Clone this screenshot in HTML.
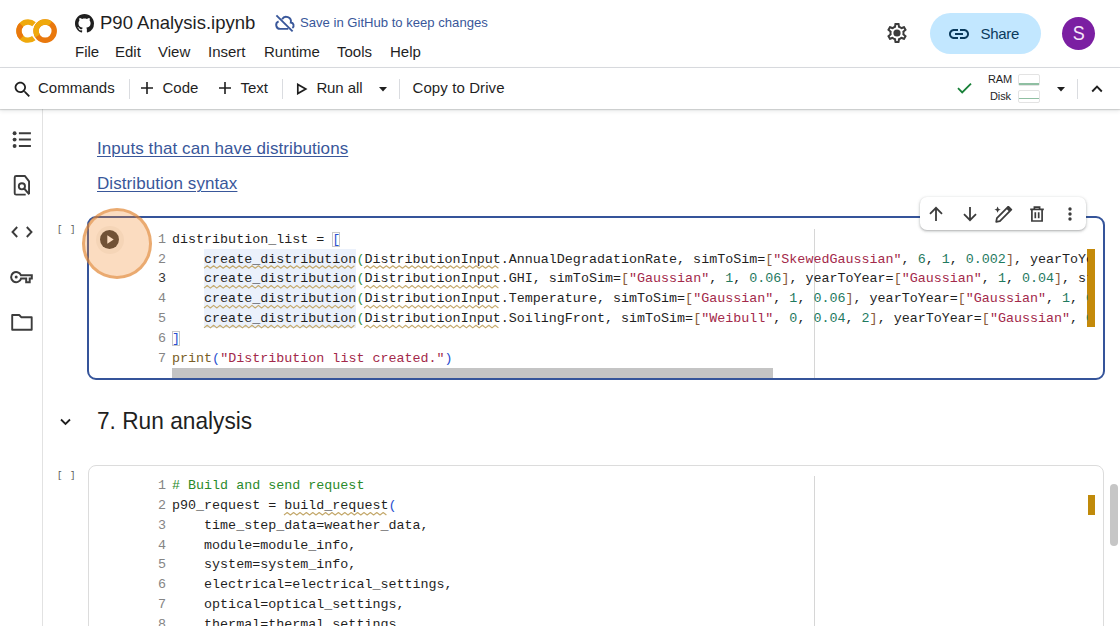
<!DOCTYPE html>
<html><head><meta charset="utf-8">
<style>
*{box-sizing:border-box;margin:0;padding:0}
html,body{width:1120px;height:626px;overflow:hidden;background:#fff;font-family:"Liberation Sans",sans-serif;color:#1f1f1f}
.abs{position:absolute}
.t{position:absolute;white-space:nowrap;line-height:1}
#header{position:absolute;left:0;top:0;width:1120px;height:68px;border-bottom:1px solid #dadce0;background:#fff}
.menu{position:absolute;top:43.9px;font-size:15px;line-height:1;color:#1f1f1f;white-space:nowrap}
#toolbar{position:absolute;z-index:5;left:0;top:68px;width:1120px;height:41px;background:#fff;box-shadow:0 1px 1px rgba(60,64,67,.18),0 2px 4px 0 rgba(60,64,67,.12)}
.tb{position:absolute;top:12.3px;font-size:15px;line-height:1;color:#1f1f1f;white-space:nowrap}
.sep{position:absolute;top:10.5px;width:1px;height:20px;background:#dadce0}
#sidebar{position:absolute;left:0;top:109px;width:43px;height:517px;border-right:1px solid #e2e2e2;background:#fff}
.link{position:absolute;left:97px;font-size:17px;line-height:1;color:#39579a;text-decoration:underline;text-underline-offset:2px;text-decoration-thickness:1.3px;white-space:nowrap;letter-spacing:0.08px}
.cell{position:absolute;border-radius:9px}
.code{position:absolute;font-family:"Liberation Mono",monospace;font-size:13.37px;line-height:19.85px;white-space:pre;color:#1f1f1f}
.ln{position:absolute;font-family:"Liberation Mono",monospace;font-size:13.37px;line-height:19.85px;white-space:pre;color:#858585;text-align:right}
.br{position:absolute;font-family:"Liberation Mono",monospace;font-size:11px;line-height:1;color:#444;white-space:pre}
.s{color:#a3294a}.n{color:#1f7a5f}.p1{color:#2a4fd0}.p2{color:#3a9040}.p3{color:#8a5a3a}.c{color:#2a8a2a}.f{color:#795e26}
.hl{background:#e7eefa}
.sq{text-decoration:underline wavy #d7b64a;text-decoration-thickness:1px;text-underline-offset:3px;text-decoration-skip-ink:none}
</style></head><body>

<div id="header">
  <!-- colab logo -->
  <svg class="abs" style="left:0;top:0" width="70" height="60" viewBox="0 0 70 60">
    <circle cx="28" cy="31.1" r="9.1" fill="none" stroke="#efa90c" stroke-width="5.3" stroke-dasharray="41.3 100" stroke-dashoffset="-7.94"/>
    <circle cx="28" cy="31.1" r="9.1" fill="none" stroke="#e9780d" stroke-width="5.3" stroke-dasharray="13.98 100" stroke-dashoffset="-21.28"/>
    <circle cx="45.15" cy="31.1" r="12.5" fill="#fff"/>
    <circle cx="45.15" cy="31.1" r="9.1" fill="none" stroke="#e9780d" stroke-width="5.4"/>
    <circle cx="45.15" cy="31.1" r="9.1" fill="none" stroke="#efa90c" stroke-width="5.4" stroke-dasharray="24.94 100" stroke-dashoffset="-23.19"/>
  </svg>
  <!-- github -->
  <svg class="abs" style="left:75px;top:14px" width="19" height="19" viewBox="0 0 16 16"><path fill="#1f1f1f" d="M8 0C3.58 0 0 3.58 0 8c0 3.54 2.29 6.53 5.47 7.59.4.07.55-.17.55-.38 0-.19-.01-.82-.01-1.49-2.010.37-2.530-.49-2.690-.94-.09-.23-.48-.94-.82-1.13-.28-.15-.68-.52-.01-.53.63-.01 1.08.58 1.23.82.72 1.21 1.87.87 2.33.66.07-.52.28-.87.51-1.07-1.78-.2-3.64-.89-3.64-3.95 0-.87.31-1.59.82-2.15-.08-.2-.36-1.02.08-2.12 0 0 .67-.21 2.2.82.64-.18 1.32-.27 2-.27.68 0 1.36.09 2 .27 1.53-1.04 2.2-.82 2.2-.82.44 1.1.16 1.92.08 2.12.51.56.82 1.27.82 2.15 0 3.07-1.87 3.75-3.65 3.95.29.25.54.73.54 1.48 0 1.07-.01 1.93-.01 2.2 0 .21.15.46.55.38A8.013 8.013 0 0016 8c0-4.42-3.58-8-8-8z"/></svg>
  <div class="t" style="left:100px;top:14.1px;font-size:18.5px;color:#1f1f1f">P90 Analysis.ipynb</div>
  <!-- cloud off -->
  <svg class="abs" style="left:270px;top:10px" width="28" height="26" viewBox="0 0 28 26"><g fill="none" stroke="#39579a" stroke-width="1.9" stroke-linecap="butt"><path d="M6.4 5.4L22.6 21.4"/><path d="M12.1 9.2A4.7 4.7 0 0 1 20.8 12.5A3 3 0 0 1 22.4 17.9"/><path d="M18.3 18.9H10.1A3.9 3.9 0 0 1 8.6 11.4"/></g></svg>
  <div class="t" style="left:300px;top:16.3px;font-size:13.1px;color:#39579a">Save in GitHub to keep changes</div>
  <div class="menu" style="left:75px">File</div>
  <div class="menu" style="left:115px">Edit</div>
  <div class="menu" style="left:158px">View</div>
  <div class="menu" style="left:208px">Insert</div>
  <div class="menu" style="left:264px">Runtime</div>
  <div class="menu" style="left:337px">Tools</div>
  <div class="menu" style="left:390px">Help</div>
  <!-- gear -->
  <svg class="abs" style="left:885px;top:21.4px" width="24" height="24" viewBox="0 0 24 24"><path fill="#3c3c3c" d="M19.43 12.98c.04-.32.07-.64.07-.98 0-.34-.03-.66-.07-.98l2.11-1.65c.19-.15.24-.42.12-.64l-2-3.46c-.09-.16-.26-.25-.44-.25-.06 0-.12.01-.17.03l-2.49 1c-.52-.4-1.08-.73-1.69-.98l-.38-2.65C14.46 2.18 14.25 2 14 2h-4c-.25 0-.46.18-.49.42l-.38 2.65c-.61.25-1.170.59-1.69.98l-2.49-1c-.06-.02-.12-.03-.18-.03-.17 0-.34.09-.43.25l-2 3.46c-.13.22-.07.49.12.64l2.11 1.65c-.04.32-.07.65-.07.98 0 .33.03.66.07.98l-2.11 1.65c-.19.15-.24.42-.12.64l2 3.46c.09.16.26.25.44.25.06 0 .12-.01.17-.03l2.49-1c.52.4 1.08.73 1.69.98l.38 2.65c.03.24.24.42.49.42h4c.25 0 .46-.18.49-.42l.38-2.65c.61-.25 1.17-.59 1.69-.98l2.49 1c.06.02.12.03.18.03.17 0 .34-.09.43-.25l2-3.46c.12-.22.07-.49-.12-.64l-2.11-1.65zm-1.98-1.71c.04.31.05.52.05.73 0 .21-.02.43-.05.73l-.14 1.13.89.7 1.08.84-.7 1.21-1.27-.51-1.04-.42-.9.68c-.43.32-.84.56-1.25.73l-1.06.43-.16 1.13-.2 1.35h-1.4l-.19-1.35-.16-1.13-1.06-.43c-.43-.18-.83-.41-1.23-.71l-.91-.7-1.06.43-1.27.51-.7-1.21 1.08-.84.89-.7-.14-1.13c-.03-.31-.05-.54-.05-.74s.02-.43.05-.73l.14-1.13-.89-.7-1.08-.84.7-1.21 1.27.51 1.04.42.9-.68c.43-.32.84-.56 1.25-.73l1.06-.43.16-1.13.2-1.35h1.39l.19 1.35.16 1.13 1.06.43c.43.18.83.41 1.23.71l.91.7 1.06-.43 1.27-.51.7 1.21-1.07.85-.89.7.14 1.13z"/><circle cx="12" cy="12" r="3.6" fill="#3c3c3c"/></svg>
  <div class="abs" style="left:930px;top:12.5px;width:111px;height:41.5px;border-radius:21px;background:#c2e7ff"></div>
  <svg class="abs" style="left:947px;top:21.6px" width="24" height="24" viewBox="0 0 24 24"><path fill="#0b3a5c" d="M3.9 12c0-1.71 1.39-3.1 3.1-3.1h4V7H7c-2.76 0-5 2.24-5 5s2.24 5 5 5h4v-1.9H7c-1.71 0-3.1-1.39-3.1-3.1zM8 13h8v-2H8v2zm9-6h-4v1.9h4c1.71 0 3.1 1.39 3.1 3.1s-1.39 3.1-3.1 3.1h-4V17h4c2.76 0 5-2.24 5-5s-2.24-5-5-5z"/></svg>
  <div class="t" style="left:980.5px;top:25.5px;font-size:15px;color:#0b3a5c;letter-spacing:-0.3px">Share</div>
  <div class="abs" style="left:1061.8px;top:16.8px;width:33.3px;height:33.3px;border-radius:50%;background:#7b1fa2"></div>
  <div class="t" style="left:1061.8px;top:23.6px;width:33.3px;text-align:center;font-size:19.5px;color:#f6e6f8;transform:scaleX(0.92)">S</div>
</div>
<div id="toolbar">
  <svg class="abs" style="left:12.4px;top:11.4px" width="21" height="21" viewBox="0 0 24 24"><path fill="#1f1f1f" d="M15.5 14h-.79l-.28-.27C15.41 12.59 16 11.11 16 9.5 16 5.91 13.09 3 9.5 3S3 5.91 3 9.5 5.91 16 9.5 16c1.61 0 3.09-.59 4.23-1.57l.27.28v.79l5 4.99L20.49 19l-4.99-5zm-6 0C7.01 14 5 11.99 5 9.5S7.01 5 9.5 5 14 7.01 14 9.5 11.99 14 9.5 14z"/></svg>
  <div class="tb" style="left:38px">Commands</div>
  <div class="sep" style="left:128.5px"></div>
  <svg class="abs" style="left:141px;top:14px" width="12" height="12" viewBox="0 0 12 12"><path d="M6 0v12M0 6h12" stroke="#1f1f1f" stroke-width="1.6"/></svg>
  <div class="tb" style="left:162.5px">Code</div>
  <svg class="abs" style="left:219px;top:14px" width="12" height="12" viewBox="0 0 12 12"><path d="M6 0v12M0 6h12" stroke="#1f1f1f" stroke-width="1.6"/></svg>
  <div class="tb" style="left:240.5px">Text</div>
  <div class="sep" style="left:281.5px"></div>
  <svg class="abs" style="left:296px;top:14.5px" width="12" height="12" viewBox="0 0 12 12"><path d="M1.8 1.4v9.2L9.8 6z" fill="none" stroke="#1f1f1f" stroke-width="1.7" stroke-linejoin="miter"/></svg>
  <div class="t" style="left:316.4px;top:12.3px;font-size:15px;letter-spacing:-0.1px">Run all</div>
  <svg class="abs" style="left:378.5px;top:19px" width="8" height="5" viewBox="0 0 8 5"><path d="M0 0h8L4 4.5z" fill="#1f1f1f"/></svg>
  <div class="sep" style="left:399px"></div>
  <div class="tb" style="left:412.5px;letter-spacing:0.1px">Copy to Drive</div>
  <svg class="abs" style="left:957px;top:13.6px" width="15" height="12" viewBox="0 0 15 12"><path d="M1 6.2l4.2 4.2L14 1.6" fill="none" stroke="#188038" stroke-width="1.8"/></svg>
  <div class="t" style="left:988px;top:6.4px;font-size:11px;color:#1f1f1f;letter-spacing:-0.2px">RAM</div>
  <div class="t" style="left:990px;top:23.3px;font-size:11px;color:#1f1f1f;letter-spacing:-0.1px">Disk</div>
  <div class="abs" style="left:1017.5px;top:5.7px;width:22px;height:12.5px;border:1px solid #e3e3e3;border-radius:2px"></div>
  <div class="abs" style="left:1018.5px;top:15.4px;width:20px;height:1.8px;background:#8fbfa2"></div>
  <div class="abs" style="left:1017.5px;top:22.4px;width:22px;height:13px;border:1px solid #e3e3e3;border-radius:2px"></div>
  <div class="abs" style="left:1018.5px;top:29.6px;width:20px;height:1.8px;background:#8fbfa2"></div>
  <svg class="abs" style="left:1056.5px;top:19px" width="8" height="5" viewBox="0 0 8 5"><path d="M0 0h8L4 4.5z" fill="#1f1f1f"/></svg>
  <div class="sep" style="left:1077.4px"></div>
  <svg class="abs" style="left:1091px;top:16.5px" width="12" height="8" viewBox="0 0 12 8"><path d="M1.2 6.5l4.8-4.8 4.8 4.8" fill="none" stroke="#1f1f1f" stroke-width="1.9"/></svg>
</div>

<div id="sidebar">
  <svg class="abs" style="left:12px;top:21px" width="20" height="20" viewBox="0 0 20 20"><circle cx="2.6" cy="3.2" r="1.95" fill="#3c3c3c"/><circle cx="2.6" cy="9.6" r="1.95" fill="#3c3c3c"/><circle cx="2.6" cy="16" r="1.95" fill="#3c3c3c"/><path d="M6.9 3.2h12M6.9 9.6h12M6.9 16h12" stroke="#3c3c3c" stroke-width="2"/></svg>
  <svg class="abs" style="left:8px;top:61px" width="28" height="30" viewBox="0 0 28 30"><path d="M17.7 24.65H8.2Q6.7 24.65 6.7 23.15V7.45Q6.7 5.95 8.2 5.95H16.8L21.05 11.3V24" fill="none" stroke="#3c3c3c" stroke-width="1.9" stroke-linejoin="round"/><circle cx="13.9" cy="16.3" r="3.1" fill="none" stroke="#3c3c3c" stroke-width="1.9"/><path d="M16.1 18.5L21.3 24.3" stroke="#3c3c3c" stroke-width="1.9"/></svg>
  <svg class="abs" style="left:11px;top:117px" width="22" height="12" viewBox="0 0 22 12"><path d="M6.2 1L1.5 6l4.7 5M15.8 1l4.7 5-4.7 5" fill="none" stroke="#3c3c3c" stroke-width="1.9"/></svg>
  <svg class="abs" style="left:6px;top:157px" width="32" height="24" viewBox="0 0 32 24"><path d="M14.93 9.2H25.8V12.6H23.7V16.2H20.2V12.6H15.07A5.1 5.1 0 1 1 14.93 9.2Z" fill="none" stroke="#3c3c3c" stroke-width="2" stroke-linejoin="miter"/><circle cx="10.2" cy="11.1" r="1.5" fill="#3c3c3c"/></svg>
  <svg class="abs" style="left:11px;top:205px" width="22" height="17" viewBox="0 0 22 17"><path d="M1.2 1h7l2 2.2h10.5v12.6H1.2z" fill="none" stroke="#3c3c3c" stroke-width="1.9" stroke-linejoin="round"/></svg>
</div>

<div class="link" style="top:139.7px">Inputs that can have distributions</div>
<div class="link" style="top:175.4px">Distribution syntax</div>
<!-- cell 1 -->
<div class="br" style="left:57px;top:225.5px;font-size:9px;letter-spacing:1.05px;color:#555">[ ]</div>
<div class="cell" style="left:87px;top:216.2px;width:1018.2px;height:163.4px;border:2px solid #35549a"></div>
<div class="abs" style="left:813.5px;top:229px;width:1px;height:149px;background:#d6d6d6"></div>
<div class="abs" style="left:1087px;top:248.6px;width:8px;height:78.4px;background:#c48a0a"></div>
<div class="abs" style="left:172px;top:368px;width:601px;height:9.5px;background:#c4c4c4"></div>
<div class="abs" style="left:204px;top:248.5px;width:152px;height:79.4px;background:#ebf1fb"></div>
<svg class="abs" style="left:0;top:0" width="1120" height="626"><path d="M204.00 268.30 L207.20 265.70 L210.40 268.30 L213.60 265.70 L216.80 268.30 L220.00 265.70 L223.20 268.30 L226.40 265.70 L229.60 268.30 L232.80 265.70 L236.00 268.30 L239.20 265.70 L242.40 268.30 L245.60 265.70 L248.80 268.30 L252.00 265.70 L255.20 268.30 L258.40 265.70 L261.60 268.30 L264.80 265.70 L268.00 268.30 L271.20 265.70 L274.40 268.30 L277.60 265.70 L280.80 268.30 L284.00 265.70 L287.20 268.30 L290.40 265.70 L293.60 268.30 L296.80 265.70 L300.00 268.30 L303.20 265.70 L306.40 268.30 L309.60 265.70 L312.80 268.30 L316.00 265.70 L319.20 268.30 L322.40 265.70 L325.60 268.30 L328.80 265.70 L332.00 268.30 L335.20 265.70 L338.40 268.30 L341.60 265.70 L344.80 268.30 L348.00 265.70 L351.20 268.30 L354.40 265.70 M364.00 268.30 L367.20 265.70 L370.40 268.30 L373.60 265.70 L376.80 268.30 L380.00 265.70 L383.20 268.30 L386.40 265.70 L389.60 268.30 L392.80 265.70 L396.00 268.30 L399.20 265.70 L402.40 268.30 L405.60 265.70 L408.80 268.30 L412.00 265.70 L415.20 268.30 L418.40 265.70 L421.60 268.30 L424.80 265.70 L428.00 268.30 L431.20 265.70 L434.40 268.30 L437.60 265.70 L440.80 268.30 L444.00 265.70 L447.20 268.30 L450.40 265.70 L453.60 268.30 L456.80 265.70 L460.00 268.30 L463.20 265.70 L466.40 268.30 L469.60 265.70 L472.80 268.30 L476.00 265.70 L479.20 268.30 L482.40 265.70 L485.60 268.30 L488.80 265.70 L492.00 268.30 L495.20 265.70 L498.40 268.30 M204.00 288.15 L207.20 285.55 L210.40 288.15 L213.60 285.55 L216.80 288.15 L220.00 285.55 L223.20 288.15 L226.40 285.55 L229.60 288.15 L232.80 285.55 L236.00 288.15 L239.20 285.55 L242.40 288.15 L245.60 285.55 L248.80 288.15 L252.00 285.55 L255.20 288.15 L258.40 285.55 L261.60 288.15 L264.80 285.55 L268.00 288.15 L271.20 285.55 L274.40 288.15 L277.60 285.55 L280.80 288.15 L284.00 285.55 L287.20 288.15 L290.40 285.55 L293.60 288.15 L296.80 285.55 L300.00 288.15 L303.20 285.55 L306.40 288.15 L309.60 285.55 L312.80 288.15 L316.00 285.55 L319.20 288.15 L322.40 285.55 L325.60 288.15 L328.80 285.55 L332.00 288.15 L335.20 285.55 L338.40 288.15 L341.60 285.55 L344.80 288.15 L348.00 285.55 L351.20 288.15 L354.40 285.55 M364.00 288.15 L367.20 285.55 L370.40 288.15 L373.60 285.55 L376.80 288.15 L380.00 285.55 L383.20 288.15 L386.40 285.55 L389.60 288.15 L392.80 285.55 L396.00 288.15 L399.20 285.55 L402.40 288.15 L405.60 285.55 L408.80 288.15 L412.00 285.55 L415.20 288.15 L418.40 285.55 L421.60 288.15 L424.80 285.55 L428.00 288.15 L431.20 285.55 L434.40 288.15 L437.60 285.55 L440.80 288.15 L444.00 285.55 L447.20 288.15 L450.40 285.55 L453.60 288.15 L456.80 285.55 L460.00 288.15 L463.20 285.55 L466.40 288.15 L469.60 285.55 L472.80 288.15 L476.00 285.55 L479.20 288.15 L482.40 285.55 L485.60 288.15 L488.80 285.55 L492.00 288.15 L495.20 285.55 L498.40 288.15 M204.00 308.00 L207.20 305.40 L210.40 308.00 L213.60 305.40 L216.80 308.00 L220.00 305.40 L223.20 308.00 L226.40 305.40 L229.60 308.00 L232.80 305.40 L236.00 308.00 L239.20 305.40 L242.40 308.00 L245.60 305.40 L248.80 308.00 L252.00 305.40 L255.20 308.00 L258.40 305.40 L261.60 308.00 L264.80 305.40 L268.00 308.00 L271.20 305.40 L274.40 308.00 L277.60 305.40 L280.80 308.00 L284.00 305.40 L287.20 308.00 L290.40 305.40 L293.60 308.00 L296.80 305.40 L300.00 308.00 L303.20 305.40 L306.40 308.00 L309.60 305.40 L312.80 308.00 L316.00 305.40 L319.20 308.00 L322.40 305.40 L325.60 308.00 L328.80 305.40 L332.00 308.00 L335.20 305.40 L338.40 308.00 L341.60 305.40 L344.80 308.00 L348.00 305.40 L351.20 308.00 L354.40 305.40 M364.00 308.00 L367.20 305.40 L370.40 308.00 L373.60 305.40 L376.80 308.00 L380.00 305.40 L383.20 308.00 L386.40 305.40 L389.60 308.00 L392.80 305.40 L396.00 308.00 L399.20 305.40 L402.40 308.00 L405.60 305.40 L408.80 308.00 L412.00 305.40 L415.20 308.00 L418.40 305.40 L421.60 308.00 L424.80 305.40 L428.00 308.00 L431.20 305.40 L434.40 308.00 L437.60 305.40 L440.80 308.00 L444.00 305.40 L447.20 308.00 L450.40 305.40 L453.60 308.00 L456.80 305.40 L460.00 308.00 L463.20 305.40 L466.40 308.00 L469.60 305.40 L472.80 308.00 L476.00 305.40 L479.20 308.00 L482.40 305.40 L485.60 308.00 L488.80 305.40 L492.00 308.00 L495.20 305.40 L498.40 308.00 M204.00 327.85 L207.20 325.25 L210.40 327.85 L213.60 325.25 L216.80 327.85 L220.00 325.25 L223.20 327.85 L226.40 325.25 L229.60 327.85 L232.80 325.25 L236.00 327.85 L239.20 325.25 L242.40 327.85 L245.60 325.25 L248.80 327.85 L252.00 325.25 L255.20 327.85 L258.40 325.25 L261.60 327.85 L264.80 325.25 L268.00 327.85 L271.20 325.25 L274.40 327.85 L277.60 325.25 L280.80 327.85 L284.00 325.25 L287.20 327.85 L290.40 325.25 L293.60 327.85 L296.80 325.25 L300.00 327.85 L303.20 325.25 L306.40 327.85 L309.60 325.25 L312.80 327.85 L316.00 325.25 L319.20 327.85 L322.40 325.25 L325.60 327.85 L328.80 325.25 L332.00 327.85 L335.20 325.25 L338.40 327.85 L341.60 325.25 L344.80 327.85 L348.00 325.25 L351.20 327.85 L354.40 325.25 M364.00 327.85 L367.20 325.25 L370.40 327.85 L373.60 325.25 L376.80 327.85 L380.00 325.25 L383.20 327.85 L386.40 325.25 L389.60 327.85 L392.80 325.25 L396.00 327.85 L399.20 325.25 L402.40 327.85 L405.60 325.25 L408.80 327.85 L412.00 325.25 L415.20 327.85 L418.40 325.25 L421.60 327.85 L424.80 325.25 L428.00 327.85 L431.20 325.25 L434.40 327.85 L437.60 325.25 L440.80 327.85 L444.00 325.25 L447.20 327.85 L450.40 325.25 L453.60 327.85 L456.80 325.25 L460.00 327.85 L463.20 325.25 L466.40 327.85 L469.60 325.25 L472.80 327.85 L476.00 325.25 L479.20 327.85 L482.40 325.25 L485.60 327.85 L488.80 325.25 L492.00 327.85 L495.20 325.25 L498.40 327.85" fill="none" stroke="#c4a96c" stroke-width="1.1" stroke-linejoin="round"/></svg>
<div class="ln" style="left:140px;top:229.7px;width:26px">1
2
<span style="color:#333">3</span>
4
5
6
7</div>
<div class="abs" style="left:172px;top:229.7px;width:915.6px;height:138px;overflow:hidden">
<div class="code" style="left:0;top:0">distribution_list = <span class="p1" style="outline:1px solid #c8c8c8;outline-offset:-1px">[</span>
    create_distribution<span class="p2">(</span>DistributionInput.AnnualDegradationRate, simToSim=<span class="p3">[</span><span class="s">"SkewedGaussian"</span>, <span class="n">6</span>, <span class="n">1</span>, <span class="n">0.002</span><span class="p3">]</span>, yearToYear=<span class="p3">[</span><span class="s">"Gaussian"</span>, <span class="n">1</span>, <span class="n">0.04</span><span class="p3">]</span>
    create_distribution<span class="p2">(</span>DistributionInput.GHI, simToSim=<span class="p3">[</span><span class="s">"Gaussian"</span>, <span class="n">1</span>, <span class="n">0.06</span><span class="p3">]</span>, yearToYear=<span class="p3">[</span><span class="s">"Gaussian"</span>, <span class="n">1</span>, <span class="n">0.04</span><span class="p3">]</span>, stepToStep=<span class="p3">[</span>
    create_distribution<span class="p2">(</span>DistributionInput.Temperature, simToSim=<span class="p3">[</span><span class="s">"Gaussian"</span>, <span class="n">1</span>, <span class="n">0.06</span><span class="p3">]</span>, yearToYear=<span class="p3">[</span><span class="s">"Gaussian"</span>, <span class="n">1</span>, <span class="n">0.04</span><span class="p3">]</span>
    create_distribution<span class="p2">(</span>DistributionInput.SoilingFront, simToSim=<span class="p3">[</span><span class="s">"Weibull"</span>, <span class="n">0</span>, <span class="n">0.04</span>, <span class="n">2</span><span class="p3">]</span>, yearToYear=<span class="p3">[</span><span class="s">"Gaussian"</span>, <span class="n">0</span>
<span class="p1" style="outline:1px solid #c8c8c8;outline-offset:-1px">]</span>
<span class="f">print</span><span class="p1">(</span><span class="s">"Distribution list created."</span><span class="p1">)</span></div>
</div>
<!-- play button -->
<div class="abs" style="left:96px;top:225.5px;width:28px;height:28px;border-radius:50%;background:#f7f5f3"></div>
<div class="abs" style="left:100px;top:230px;width:19px;height:19px;border-radius:50%;background:#3a3a3a"></div>
<svg class="abs" style="left:100px;top:230px" width="19" height="19" viewBox="0 0 19 19"><path d="M7.3 5.3v8.4l6.4-4.2z" fill="#fff"/></svg>
<div class="abs" style="left:81.5px;top:207.5px;width:70.5px;height:71px;border-radius:50%;background:rgba(242,139,48,.30);border:3px solid rgba(222,135,55,.58)"></div>

<!-- cell toolbar -->
<div class="abs" style="left:920.2px;top:197.1px;width:166px;height:33.2px;border-radius:7px;background:#fff;box-shadow:0 1px 2px rgba(60,64,67,.3),0 1px 3px 1px rgba(60,64,67,.12)"></div>
<svg class="abs" style="left:928px;top:206px" width="16" height="16" viewBox="0 0 16 16"><path d="M8 15V2M2 7.8l6-6 6 6" fill="none" stroke="#3c3c3c" stroke-width="1.8"/></svg>
<svg class="abs" style="left:962px;top:206px" width="16" height="16" viewBox="0 0 16 16"><path d="M8 1v13M2 8.2l6 6 6-6" fill="none" stroke="#3c3c3c" stroke-width="1.8"/></svg>
<svg class="abs" style="left:994px;top:205.5px" width="19" height="18" viewBox="0 0 19 18"><path d="M3.6 0.4Q4 3.2 6.8 3.6Q4 4 3.6 6.8Q3.2 4 0.4 3.6Q3.2 3.2 3.6 0.4Z" fill="#3c3c3c"/><path d="M2.9 12.1L14.3 0.7L17.3 3.7L5.9 15.1L2.2 15.8Z" fill="none" stroke="#3c3c3c" stroke-width="1.75" stroke-linejoin="round"/><path d="M14.3 0.7L17.3 3.7L15.3 5.7L12.3 2.7Z" fill="#3c3c3c"/></svg>
<svg class="abs" style="left:1029px;top:206.3px" width="16" height="17" viewBox="0 0 16 17"><path d="M1.2 3.3h13.6M5.4 3.3V1.2h5.2v2.1M2.9 3.3v11.7h10.2V3.3M6.3 6.2v6.1M9.7 6.2v6.1" fill="none" stroke="#3c3c3c" stroke-width="1.7"/></svg>
<svg class="abs" style="left:1066px;top:206px" width="8" height="16" viewBox="0 0 8 16"><circle cx="4" cy="3" r="1.7" fill="#3c3c3c"/><circle cx="4" cy="8" r="1.7" fill="#3c3c3c"/><circle cx="4" cy="13" r="1.7" fill="#3c3c3c"/></svg>

<!-- heading -->
<svg class="abs" style="left:59px;top:416.5px" width="13" height="10" viewBox="0 0 13 10"><path d="M2 2.5l4.5 4.5L11 2.5" fill="none" stroke="#1f1f1f" stroke-width="1.8"/></svg>
<div class="t" style="left:96.6px;top:408.6px;font-size:24.8px;color:#1f1f1f;transform:scaleX(0.915);transform-origin:0 0">7. Run analysis</div>

<!-- cell 2 -->
<div class="br" style="left:57px;top:471.8px;font-size:9px;letter-spacing:1.05px;color:#555">[ ]</div>
<div class="cell" style="left:88px;top:464.5px;width:1016px;height:200px;border:1px solid #dcdcdc;border-radius:8px"></div>
<div class="abs" style="left:813.5px;top:476px;width:1px;height:150px;background:#d6d6d6"></div>
<div class="abs" style="left:1087.6px;top:494.8px;width:7.6px;height:20.3px;background:#c08a0a"></div>
<div class="abs" style="left:1109.6px;top:484px;width:8.3px;height:62.3px;border-radius:4.2px;background:#c6c6c6"></div>
<svg class="abs" style="left:0;top:0" width="1120" height="626"><path d="M284.00 515.05 L287.20 512.45 L290.40 515.05 L293.60 512.45 L296.80 515.05 L300.00 512.45 L303.20 515.05 L306.40 512.45 L309.60 515.05 L312.80 512.45 L316.00 515.05 L319.20 512.45 L322.40 515.05 L325.60 512.45 L328.80 515.05 L332.00 512.45 L335.20 515.05 L338.40 512.45 L341.60 515.05 L344.80 512.45 L348.00 515.05 L351.20 512.45 L354.40 515.05 L357.60 512.45 L360.80 515.05 L364.00 512.45 L367.20 515.05 L370.40 512.45 L373.60 515.05 L376.80 512.45 L380.00 515.05 L383.20 512.45 L386.40 515.05" fill="none" stroke="#c4a96c" stroke-width="1.1" stroke-linejoin="round"/></svg>
<div class="ln" style="left:140px;top:476.1px;width:26px">1
2
3
4
5
6
7
8</div>
<div class="code" style="left:172px;top:476.1px"><span class="c"># Build and send request</span>
p90_request = build_request<span class="p1">(</span>
    time_step_data=weather_data,
    module=module_info,
    system=system_info,
    electrical=electrical_settings,
    optical=optical_settings,
    thermal=thermal_settings,</div>

</body></html>
